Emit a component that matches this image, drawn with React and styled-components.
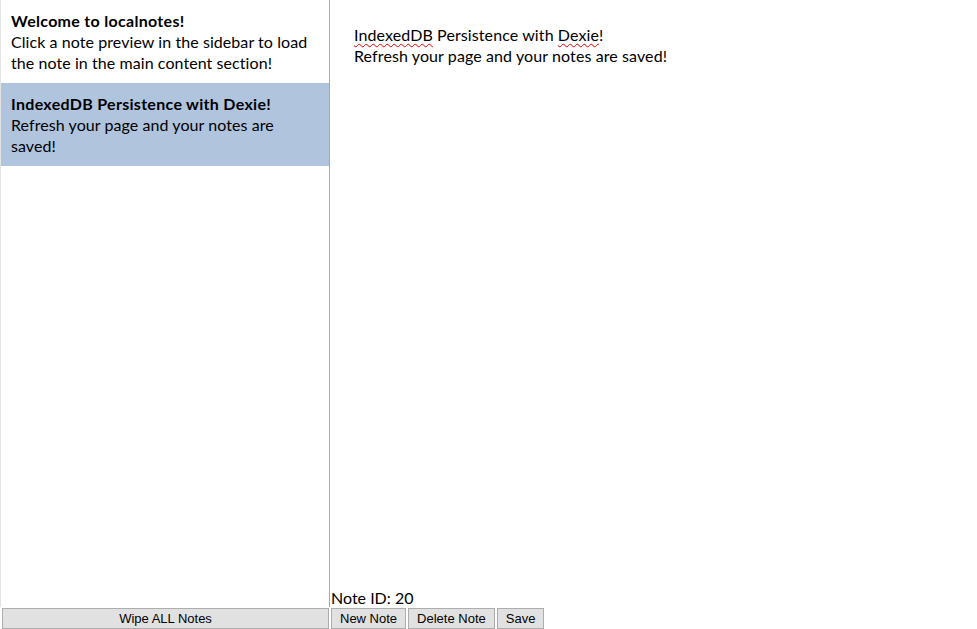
import styled, { createGlobalStyle } from "styled-components";

const GlobalStyle = createGlobalStyle`
  html, body {
    margin: 0;
    padding: 0;
    background: #fff;
  }
  body {
    font-family: "Segoe UI", Lato, "Open Sans", sans-serif;
    font-size: 16px;
    color: #000;
  }
`;

const Page = styled.div`
  display: flex;
  height: 629px;
  width: 977px;
  overflow: hidden;
`;

const SideColumn = styled.div`
  display: flex;
  flex-direction: column;
  width: 330px;
  flex-shrink: 0;
`;

const NoteList = styled.div`
  flex: 1;
  border-left: 1px solid #e3e3e3;
  border-right: 1px solid #a9a9a9;
`;

const Preview = styled.div`
  padding: 10px;
  line-height: 21px;
  letter-spacing: 0.07px;
  background: ${({ $active }) => ($active ? "#b0c4de" : "transparent")};
  cursor: pointer;
`;

const PreviewTitle = styled.div`
  font-weight: bold;
  letter-spacing: 0.3px;
`;

const Button = styled.button`
  margin: 0;
  height: 21px;
  padding: 0 8px;
  border: 1px solid #adadad;
  background: #e1e1e1;
  font-family: "Liberation Sans", Arial, sans-serif;
  font-size: 13px;
  color: #000;
  cursor: pointer;
`;

const WipeButton = styled(Button)`
  width: 327px;
  margin: 1px 0 0 2px;
`;

const MainColumn = styled.div`
  flex: 1;
  display: flex;
  flex-direction: column;
`;

const Editor = styled.div`
  flex: 1;
  padding: 24px 24px;
  line-height: 21px;
  letter-spacing: 0.1px;
  outline: none;
`;

const Misspelled = styled.span`
  text-decoration: underline wavy #e00000;
  text-decoration-thickness: 1px;
  text-underline-offset: 2px;
`;

const NoteId = styled.div`
  padding-left: 1px;
  line-height: 21px;
`;

const Toolbar = styled.div`
  display: flex;
  gap: 2px;
  padding-left: 1px;
`;

export default function App() {
  return (
    <>
      <GlobalStyle />
      <Page>
        <SideColumn>
          <NoteList>
            <Preview>
              <PreviewTitle>Welcome to localnotes!</PreviewTitle>
              Click a note preview in the sidebar to load the note in the main content section!
            </Preview>
            <Preview $active>
              <PreviewTitle>IndexedDB Persistence with Dexie!</PreviewTitle>
              Refresh your page and your notes are saved!
            </Preview>
          </NoteList>
          <WipeButton>Wipe ALL Notes</WipeButton>
        </SideColumn>
        <MainColumn>
          <Editor>
            <div>
              <Misspelled>IndexedDB</Misspelled> Persistence with <Misspelled>Dexie</Misspelled>!
            </div>
            <div>Refresh your page and your notes are saved!</div>
          </Editor>
          <NoteId>Note ID: 20</NoteId>
          <Toolbar>
            <Button>New Note</Button>
            <Button>Delete Note</Button>
            <Button>Save</Button>
          </Toolbar>
        </MainColumn>
      </Page>
    </>
  );
}
